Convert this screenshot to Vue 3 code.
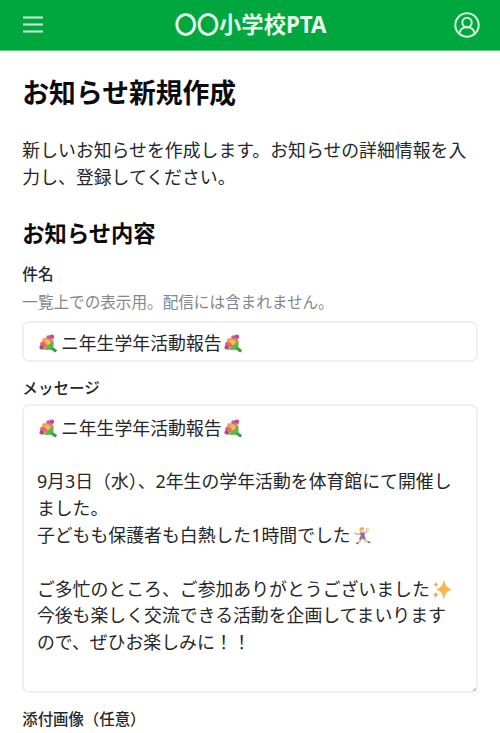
<template>
  <div class="page">
    <svg class="emoji-defs" aria-hidden="true">
      <symbol id="emoji-bouquet" viewBox="0 0 20 20">
        <path d="M3 16.500 5 12l8-6.500 2.500 1.500-.3 7 3.800 2.500-2 2.500-4-2.500z" fill="#8ccb68" />
        <path d="m9 12 5-4 1 .5-.2 5.500 3.700 3-1.500 2-4-2.700-7 .2z" fill="#5cb553" />
        <path d="m13.500 14 5.500 3.500-2 2-4.500-4z" fill="#2f9a4b" />
        <circle cx="10" cy="3.800" r="2.500" fill="#c95fa0" />
        <circle cx="13.500" cy="3" r="2.500" fill="#c04b8c" />
        <circle cx="6" cy="7" r="2.800" fill="#f3a14e" />
        <circle cx="3.500" cy="10.500" r="2.400" fill="#e0608a" />
        <circle cx="2.800" cy="14" r="2.300" fill="#b8497f" />
        <circle cx="12" cy="6.700" r="2.500" fill="#ee7d5c" />
        <circle cx="9.300" cy="8.700" r="2.700" fill="#f8bd4a" />
        <circle cx="6" cy="11.500" r="2.400" fill="#ec6670" />
      </symbol>
      <symbol id="emoji-player" viewBox="0 0 20 20">
        <path d="m11 12 1.500 3 4 1.800M9 12l-1.500 4-2.500 2" fill="none" stroke="#efb98a" stroke-width="1.800" />
        <path d="m8 8-3.500.8L2 7.500M12 8l2.500-2.500V3" fill="none" stroke="#edb184" stroke-width="1.600" stroke-linecap="round" />
        <path d="m7.500 6.500 4.500.3.300 3.700 1.200 3.300-2.500.4-1.500-1.500L8 15l-1.800-1L8 10.500z" fill="#8b6cac" />
        <circle cx="9.500" cy="4" r="2.400" fill="#f6c67a" />
        <path d="M7 5V2l3-1 2 1.800-3 .4L8 6z" fill="#e5ab48" />
        <circle cx="15.500" cy="4" r="1.900" fill="#efd9b4" />
        <path d="m3.500 17.500 2 1.300M15.500 17l2.800.3" stroke="#85576f" stroke-width="1.500" />
      </symbol>
      <symbol id="emoji-sparkles" viewBox="0 0 20 20">
        <path d="M12.500.8c.8 5 2.700 7.200 7.300 9.200-4.600 2-6.500 4.200-7.300 9.200C11.700 14.200 9.800 12 5.200 10c4.600-2 6.500-4.200 7.300-9.200z" fill="#f9b54c" stroke="#f9b54c" stroke-width="1" />
        <path d="M4.200 1.500c.4 2 1 2.700 2.700 3.200-1.700.5-2.300 1.200-2.700 3.200-.4-2-1-2.700-2.700-3.200 1.700-.5 2.300-1.200 2.700-3.200zM4 12c.5 2.100 1.200 2.900 3 3.500-1.800.6-2.500 1.400-3 3.500-.5-2.100-1.200-2.900-3-3.500 1.800-.6 2.500-1.400 3-3.500z" fill="#f4a15c" />
      </symbol>
    </svg>

    <header class="app-bar">
      <button class="icon-button" type="button" aria-label="メニュー">
        <svg class="menu-icon" viewBox="0 0 20 20">
          <path d="M0 2.500h20M0 9.500h20M0 16.500h20" />
        </svg>
      </button>
      <span class="app-title">〇〇小学校PTA</span>
      <button class="icon-button" type="button" aria-label="アカウント">
        <svg class="user-icon" viewBox="0 0 26 26">
          <circle cx="13" cy="13" r="11.700" />
          <circle cx="13" cy="10.500" r="4.700" />
          <path d="M5.300 21.500c.7-4 3.700-6.300 7.700-6.300s7 2.300 7.700 6.300" />
        </svg>
      </button>
    </header>

    <main class="content">
      <h1>お知らせ新規作成</h1>
      <p class="lead">新しいお知らせを作成します。お知らせの詳細情報を入力し、登録してください。</p>

      <h2>お知らせ内容</h2>

      <div class="field">
        <span id="subject-label" class="field-label">件名</span>
        <p class="field-hint">一覧上での表示用。配信には含まれません。</p>
        <div class="control" role="textbox" aria-labelledby="subject-label">
          <template v-for="(part, i) in subject" :key="i">
            <svg v-if="part.emoji" class="emoji"><use :href="'#emoji-' + part.emoji" /></svg>
            <template v-else>{{ part.text }}</template>
          </template>
        </div>
      </div>

      <div class="field">
        <span id="message-label" class="field-label">メッセージ</span>
        <div class="control control--area" role="textbox" aria-multiline="true" aria-labelledby="message-label">
          <div v-for="(line, n) in message" :key="n" class="line">
            <template v-for="(part, i) in line" :key="i">
              <svg v-if="part.emoji" class="emoji"><use :href="'#emoji-' + part.emoji" /></svg>
              <template v-else>{{ part.text }}</template>
            </template>
          </div>
          <svg class="grip" viewBox="0 0 4 4"><path d="M0 4 4 0M2.500 4 4 2.500" /></svg>
        </div>
      </div>

      <div class="field">
        <span class="field-label field-label--images">添付画像（任意）</span>
      </div>
    </main>
  </div>
</template>

<script setup>
const subject = [{ emoji: "bouquet" }, { text: "ニ年生学年活動報告" }, { emoji: "bouquet" }];

const message = [
  subject,
  [],
  [{ text: "9月3日（水）、2年生の学年活動を体育館にて開催しました。" }],
  [{ text: "子どもも保護者も白熱した1時間でした" }, { emoji: "player" }],
  [],
  [{ text: "ご多忙のところ、ご参加ありがとうございました" }, { emoji: "sparkles" }],
  [{ text: "今後も楽しく交流できる活動を企画してまいりますので、ぜひお楽しみに！！" }],
];
</script>

<style>
body {
  background: #fff;
  overflow: hidden;
}
</style>

<style scoped>
.page {
  height: 733px;
  overflow: hidden;
  color: #262629;
  font-family: "Noto Sans", "Noto Sans CJK JP", sans-serif;
  font-size: 17.87px;
  line-height: 26.8px;
}

.emoji-defs {
  position: absolute;
  width: 0;
  height: 0;
}

.app-bar {
  display: flex;
  align-items: center;
  justify-content: space-between;
  box-sizing: border-box;
  height: 51px;
  padding: 0 20px 1px 23px;
  background: #00a63e;
  border-bottom: 1px solid #62c785;
  color: #e6fbea;
}

.app-title {
  padding: 1px 2px 0 0;
  font-size: 22.3px;
  font-weight: 700;
}

.icon-button {
  display: flex;
  width: 26px;
  padding: 0;
  border: 0;
  background: none;
  color: #d5f8dc;
}

.icon-button svg {
  fill: none;
  stroke: currentColor;
}

.menu-icon {
  width: 20px;
  height: 20px;
  margin-top: 1px;
  stroke-width: 2;
}

.user-icon {
  width: 26px;
  height: 26px;
  stroke-width: 2;
}

.content {
  padding: 24px 22.3px 0;
}

h1,
h2,
p {
  margin: 0;
}

h1 {
  color: #0b0b0d;
  font-size: 26.8px;
  line-height: 36px;
}

.lead {
  margin-top: 26px;
}

h2 {
  margin: 27px 0 12px;
  color: #0b0b0d;
  font-size: 22.3px;
  line-height: 31px;
}

.field + .field {
  margin-top: 13px;
}

.field-label {
  display: block;
  font-size: 15.6px;
  font-weight: 500;
  font-family: "Noto Sans CJK JP", sans-serif;
  line-height: 24px;
}

.field-label--images {
  font-size: 15.4px;
}

.field-hint {
  margin: 6px 0 8px;
  color: #85858c;
  font-size: 15.6px;
  line-height: 22.3px;
}

.control {
  box-sizing: border-box;
  height: 41px;
  padding: 7px 12.600px;
  border: 2px solid #f0f0f1;
  border-radius: 7px;
}

.control--area {
  position: relative;
  height: 289px;
  margin-top: 5px;
  padding: 9px 12.600px;
}

.line {
  min-height: 26.8px;
}

.emoji {
  display: inline-block;
  width: 19px;
  height: 19px;
  margin: 0 2.600px 0 2.400px;
  vertical-align: -3px;
}

.grip {
  position: absolute;
  right: 0;
  bottom: 0;
  width: 3px;
  height: 3px;
  fill: none;
  stroke: #77777d;
  stroke-width: 0.8;
}
</style>
